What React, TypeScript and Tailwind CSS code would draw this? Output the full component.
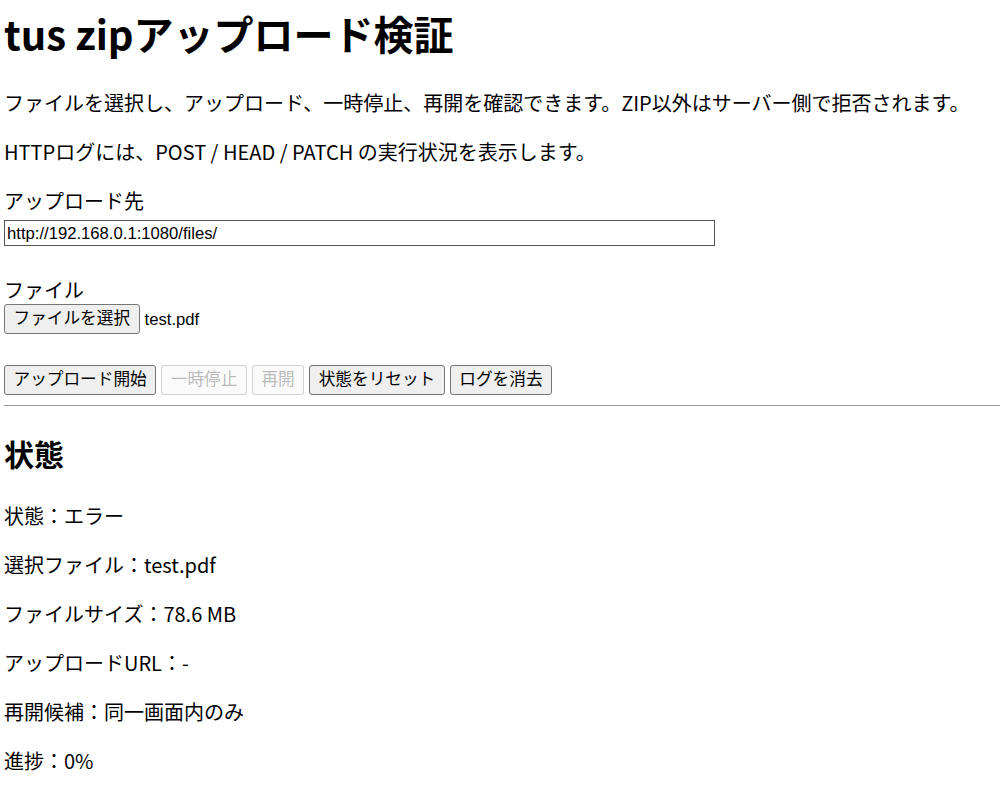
const statusRows = [
  '状態：エラー',
  '選択ファイル：test.pdf',
  'ファイルサイズ：78.6 MB',
  'アップロードURL：-',
  '再開候補：同一画面内のみ',
  '進捗：0%',
];

const ctrl = "font-['Liberation_Sans','Noto_Sans_CJK_JP',sans-serif] text-[16.67px]";

function Btn({ label, disabled }: { label: string; disabled?: boolean }) {
  return (
    <button
      disabled={disabled}
      className={
        disabled
          ? `${ctrl} h-[30px] px-[8.5px] pt-[1px] rounded-[3px] border border-[#767676]/30 bg-[#efefef]/30 text-[#101010]/30 leading-none`
          : `${ctrl} h-[30px] px-[8.5px] pt-[1px] rounded-[3px] border border-[#767676] bg-[#efefef] text-black leading-none`
      }
    >
      {label}
    </button>
  );
}

export default function App() {
  return (
    <div className="min-h-[786px] bg-white pl-[4px] pt-[4px] text-black font-['Noto_Sans_CJK_JP',sans-serif] text-[20px] leading-[29px]">
      <h1 className="text-[40px] leading-[58px] font-bold mb-[26px]">tus zipアップロード検証</h1>
      <p className="mb-[20px]">
        ファイルを選択し、アップロード、一時停止、再開を確認できます。ZIP以外はサーバー側で拒否されます。
      </p>
      <p className="mb-[20px]">HTTPログには、POST / HEAD / PATCH の実行状況を表示します。</p>

      <label className="block">アップロード先</label>
      <input
        readOnly
        value="http://192.168.0.1:1080/files/"
        className={`${ctrl} block mt-[5px] w-[711px] h-[26px] px-[2px] border border-[#555] text-black outline-none`}
      />

      <label className="block mt-[29px]">ファイル</label>
      <div className="flex items-center gap-[5px]">
        <Btn label="ファイルを選択" />
        <span className="font-['Liberation_Sans',sans-serif] text-[16.67px]">test.pdf</span>
      </div>

      <div className="flex gap-[5px] mt-[31px]">
        <Btn label="アップロード開始" />
        <Btn label="一時停止" disabled />
        <Btn label="再開" disabled />
        <Btn label="状態をリセット" />
        <Btn label="ログを消去" />
      </div>

      <hr className="mt-[10px] border-t border-[#9a9a9a]" />

      <h2 className="text-[30px] leading-[43px] font-bold mt-[26px] mb-[26px]">状態</h2>
      {statusRows.map((r) => (
        <p key={r} className="mb-[20px]">
          {r}
        </p>
      ))}
    </div>
  );
}
